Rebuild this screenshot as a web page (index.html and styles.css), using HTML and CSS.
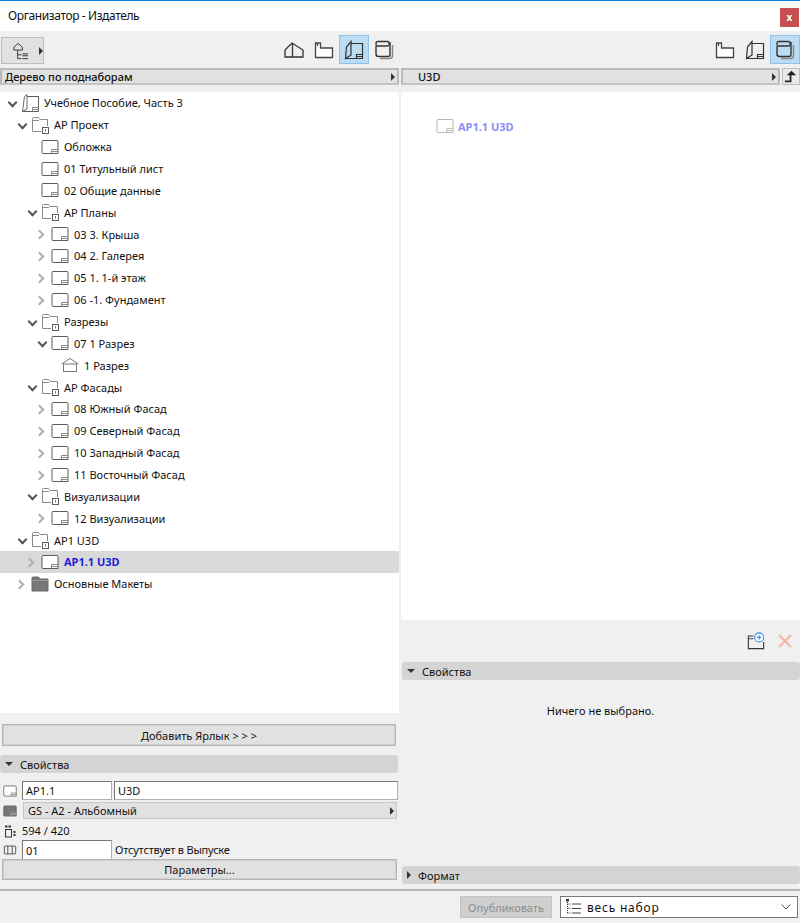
FILE: index.html
```html
<!DOCTYPE html>
<html lang="ru">

<head>
  <meta charset="utf-8">
  <title>Организатор - Издатель</title>
  <link rel="stylesheet" href="styles.css">
</head>

<body>
  <svg class="sprites" xmlns="http://www.w3.org/2000/svg">
    <symbol id="i-sheet" viewBox="0 0 18 16">
      <path d="M2 1.500H16a1 1 0 0 1 1 1V14.500H2a1 1 0 0 1-1-1V2.500a1 1 0 0 1 1-1z" fill="#fff" stroke="#5c5c5c" />
      <path d="M10.500 14.500V10.500H17M10.500 12.500H17" fill="none" stroke="#8a8a8a" />
    </symbol>
    <symbol id="i-sheet-light" viewBox="0 0 18 16">
      <path d="M2 1.500H16a1 1 0 0 1 1 1V14.500H2a1 1 0 0 1-1-1V2.500a1 1 0 0 1 1-1z" fill="#fff" stroke="#b8b8b8" />
      <path d="M10.500 14.500V10.500H17M10.500 12.500H17" fill="none" stroke="#c4c4c4" />
    </symbol>
    <symbol id="i-sheet-fill" viewBox="0 0 18 16">
      <path d="M2 1.500H16a1 1 0 0 1 1 1V14.500H2a1 1 0 0 1-1-1V2.500a1 1 0 0 1 1-1z" fill="#777" stroke="#5c5c5c" />
      <path d="M10.500 14.500V10.500H17M10.500 12.500H17" fill="none" stroke="#aaa" />
    </symbol>
    <symbol id="i-folder" viewBox="0 0 18 18">
      <path d="M1.500 15.500V2.500a1 1 0 0 1 1-1h5l1.500 2H16.500V10M1.500 15.500H10" fill="none" stroke="#8a8a8a" />
      <path d="M1.500 4.500H8" fill="none" stroke="#8a8a8a" />
      <rect x="11.500" y="11.500" width="6" height="6" fill="#fff" stroke="#5c5c5c" />
      <path d="M14.500 13v2.500" stroke="#777" />
    </symbol>
    <symbol id="i-folder-fill" viewBox="0 0 18 16">
      <path d="M1 15V2a1 1 0 0 1 1-1h5.500l1.500 2H17v12z" fill="#777" stroke="#6a6a6a" />
      <path d="M1 4.500H17" stroke="#999" />
    </symbol>
    <symbol id="i-book" viewBox="0 0 18 20">
      <path d="M1.500 18.500L3.500 3.500 6 1.500V16z" fill="#fff" stroke="#6a6a6a" />
      <path d="M6 3.500H17.500V18.500H1.500" fill="none" stroke="#5c5c5c" />
      <path d="M11.500 18.500V14.500H17.500M11.500 16.500H17.500" fill="none" stroke="#8a8a8a" />
    </symbol>
    <symbol id="i-section" viewBox="0 0 18 16">
      <path d="M.5 7L9 1.500 17.500 7" fill="none" stroke="#777" />
      <rect x="2.500" y="7" width="13" height="7.500" fill="#fff" stroke="#777" />
    </symbol>
    <symbol id="i-tb-house" viewBox="0 0 20 20">
      <path d="M1 17V10L8 3 19 10V17zM8.500 3V17" fill="none" stroke="#333" stroke-width="1.300" />
    </symbol>
    <symbol id="i-tb-layout" viewBox="0 0 20 18">
      <path d="M1.500 2H6.500V7H18.500V16.500H1.500zM3.500 2V5" fill="#fff" stroke="#444" stroke-width="1.300" />
    </symbol>
    <symbol id="i-tb-book" viewBox="0 0 20 20">
      <path d="M1.500 18.500L2.500 7 7 1.500V15z" fill="none" stroke="#333" stroke-width="1.200" />
      <path d="M7 3.500H18.500V18.500H1.500M12.500 18.500V14.500H18.500M12.500 16.500H18.500" fill="none" stroke="#333" stroke-width="1.200" />
    </symbol>
    <symbol id="i-tb-stack" viewBox="0 0 20 20">
      <path d="M18.500 5V15.500a3 3 0 0 1-3 3H6" fill="none" stroke="#888" stroke-width="1.500" />
      <rect x="2" y="1.500" width="13" height="4.500" rx="1.500" fill="none" stroke="#333" stroke-width="1.300" />
      <path d="M2 6V14a2.500 2.500 0 0 0 2.500 2.500H14a2 2 0 0 0 2-2V2" fill="none" stroke="#333" stroke-width="1.400" />
    </symbol>
    <symbol id="i-tree" viewBox="0 0 20 20">
      <path d="M3 6L7.500 2 12 6v3H3zM7 9v9M7 14h4M7 18h4" fill="none" stroke="#333" />
      <path d="M12 13h6M12 15h6M12 18h6" stroke="#333" />
    </symbol>
  </svg>

  <div class="window">
    <header class="titlebar">
      <span class="title">Организатор - Издатель</span>
      <button class="close-btn">x</button>
    </header>

    <div class="panes">
      <section class="pane pane-left">
        <div class="toolbar">
          <button class="tree-btn">
            <svg class="tree-icon"><use href="#i-tree" /></svg>
            <span class="arrow-right"></span>
          </button>
          <div class="tool-group">
            <span class="tool"><svg><use href="#i-tb-house" /></svg></span>
            <span class="tool"><svg><use href="#i-tb-layout" /></svg></span>
            <span class="tool active"><svg><use href="#i-tb-book" /></svg></span>
            <span class="tool"><svg><use href="#i-tb-stack" /></svg></span>
          </div>
        </div>
        <div class="picker-row">
          <div class="picker"><span>Дерево по поднаборам</span><span class="arrow-right"></span></div>
        </div>

        <ul class="tree">
          <li class="row lv0"><span class="chev down"></span><svg class="ico ico-book"><use href="#i-book" /></svg>Учебное Пособие, Часть 3</li>
          <li class="row lv1"><span class="chev down"></span><svg class="ico ico-folder"><use href="#i-folder" /></svg>АР Проект</li>
          <li class="row lv2"><span class="chev none"></span><svg class="ico"><use href="#i-sheet" /></svg>Обложка</li>
          <li class="row lv2"><span class="chev none"></span><svg class="ico"><use href="#i-sheet" /></svg>01 Титульный лист</li>
          <li class="row lv2"><span class="chev none"></span><svg class="ico"><use href="#i-sheet" /></svg>02 Общие данные</li>
          <li class="row lv2"><span class="chev down"></span><svg class="ico ico-folder"><use href="#i-folder" /></svg>АР Планы</li>
          <li class="row lv3"><span class="chev"></span><svg class="ico"><use href="#i-sheet" /></svg>03 3. Крыша</li>
          <li class="row lv3"><span class="chev"></span><svg class="ico"><use href="#i-sheet" /></svg>04 2. Галерея</li>
          <li class="row lv3"><span class="chev"></span><svg class="ico"><use href="#i-sheet" /></svg>05 1. 1-й этаж</li>
          <li class="row lv3"><span class="chev"></span><svg class="ico"><use href="#i-sheet" /></svg>06 -1. Фундамент</li>
          <li class="row lv2"><span class="chev down"></span><svg class="ico ico-folder"><use href="#i-folder" /></svg>Разрезы</li>
          <li class="row lv3"><span class="chev down"></span><svg class="ico"><use href="#i-sheet" /></svg>07 1 Разрез</li>
          <li class="row lv4"><span class="chev none"></span><svg class="ico"><use href="#i-section" /></svg>1 Разрез</li>
          <li class="row lv2"><span class="chev down"></span><svg class="ico ico-folder"><use href="#i-folder" /></svg>АР Фасады</li>
          <li class="row lv3"><span class="chev"></span><svg class="ico"><use href="#i-sheet" /></svg>08 Южный Фасад</li>
          <li class="row lv3"><span class="chev"></span><svg class="ico"><use href="#i-sheet" /></svg>09 Северный Фасад</li>
          <li class="row lv3"><span class="chev"></span><svg class="ico"><use href="#i-sheet" /></svg>10 Западный Фасад</li>
          <li class="row lv3"><span class="chev"></span><svg class="ico"><use href="#i-sheet" /></svg>11 Восточный Фасад</li>
          <li class="row lv2"><span class="chev down"></span><svg class="ico ico-folder"><use href="#i-folder" /></svg>Визуализации</li>
          <li class="row lv3"><span class="chev"></span><svg class="ico"><use href="#i-sheet" /></svg>12 Визуализации</li>
          <li class="row lv1"><span class="chev down"></span><svg class="ico ico-folder"><use href="#i-folder" /></svg>АР1 U3D</li>
          <li class="row lv2 selected"><span class="chev"></span><svg class="ico"><use href="#i-sheet" /></svg>АР1.1 U3D</li>
          <li class="row lv1"><span class="chev"></span><svg class="ico"><use href="#i-folder-fill" /></svg>Основные Макеты</li>
        </ul>

        <div class="left-bottom">
          <button class="wide-btn add-btn">Добавить Ярлык &gt; &gt; &gt;</button>
          <div class="section-head"><span class="arrow-down"></span>Свойства</div>
          <div class="prop-row prop-first">
            <svg class="prop-icon"><use href="#i-sheet" /></svg>
            <span class="field field-id">АР1.1</span>
            <span class="field field-name">U3D</span>
          </div>
          <div class="prop-row prop-select">
            <svg class="prop-icon"><use href="#i-sheet-fill" /></svg>
            <div class="master"><span>GS - A2 - Альбомный</span><span class="arrow-right"></span></div>
          </div>
          <div class="prop-row prop-size">
            <svg class="prop-icon" viewBox="0 0 14 14">
              <path d="M2 2.500h2.500M5.500 2.500h2.500" stroke="#333" stroke-width="2" />
              <rect x="2.500" y="5.500" width="6" height="7.500" fill="none" stroke="#333" />
              <path d="M11.500 7v6" stroke="#333" stroke-width="2" stroke-dasharray="2 1" />
            </svg>
            <span>594 / 420</span>
          </div>
          <div class="prop-row prop-num">
            <svg class="prop-icon" viewBox="0 0 16 12">
              <rect x="1.500" y="1.500" width="13" height="9" rx="1" fill="none" stroke="#444" />
              <path d="M5.500 1.500v9M10.500 1.500v9" stroke="#444" />
            </svg>
            <span class="field field-num">01</span>
            <span class="missing">Отсутствует в Выпуске</span>
          </div>
          <button class="wide-btn params-btn">Параметры...</button>
        </div>
      </section>

      <section class="pane pane-right">
        <div class="toolbar">
          <div></div>
          <div class="tool-group">
            <span class="tool"><svg><use href="#i-tb-layout" /></svg></span>
            <span class="tool"><svg><use href="#i-tb-book" /></svg></span>
            <span class="tool active"><svg><use href="#i-tb-stack" /></svg></span>
          </div>
        </div>
        <div class="picker-row">
          <div class="picker picker-u3d"><span>U3D</span><span class="arrow-right"></span></div>
          <button class="up-btn">
            <svg viewBox="0 0 16 14"><path d="M3 5.500h11L8.500 .5z" fill="#222" /><path d="M1 12.500H7.500V5" fill="none" stroke="#222" stroke-width="2" /></svg>
          </button>
        </div>

        <div class="canvas">
          <div class="canvas-item"><svg class="ico"><use href="#i-sheet-light" /></svg>АР1.1 U3D</div>
        </div>

        <div class="right-tools">
          <svg class="new-folder" viewBox="0 0 20 20">
            <path d="M7 4.500H1.500V18.500H18.500V11" fill="none" stroke="#333" stroke-width="1.200" />
            <path d="M1.500 7.500H7" stroke="#333" />
            <circle cx="13.500" cy="6" r="5" fill="#fff" stroke="#3b8ee8" stroke-width="1.200" />
            <path d="M13.500 3.500v5M11 6h5" stroke="#3b8ee8" stroke-width="1.200" />
          </svg>
          <svg class="remove" viewBox="0 0 14 14"><path d="M1 1L13 13M13 1L1 13" stroke="#f6b3a6" stroke-width="2" /></svg>
        </div>
        <div class="section-head"><span class="arrow-down"></span>Свойства</div>
        <div class="nothing">Ничего не выбрано.</div>
        <div class="section-head"><span class="arrow-right"></span>Формат</div>
      </section>
    </div>

    <footer class="footer">
      <button class="publish-btn">Опубликовать</button>
      <div class="scope">
        <svg class="scope-icon" viewBox="0 0 16 16">
          <path d="M1.500 1v13M1.500 5h3M1.500 9.500h3M1.500 14h3" stroke="#333" stroke-dasharray="1 1" />
          <path d="M6 5h9M6 9.500h9M6 14h9" stroke="#444" />
          <rect x="0" y="0" width="3" height="2.500" fill="#333" />
        </svg>
        <span>весь набор</span>
        <svg class="scope-chev" viewBox="0 0 10 6"><path d="M.5 .5L5 5 9.500 .5" fill="none" stroke="#555" /></svg>
      </div>
    </footer>
  </div>
</body>

</html>
```

FILE: styles.css
```css
* {
  box-sizing: border-box;
}

html,
body {
  margin: 0;
  height: 100%;
}

body {
  background: #f0f0f0;
  color: #111;
  font-family: "Noto Sans", "Open Sans", sans-serif;
  font-size: 11px;
}

button {
  font: inherit;
  color: inherit;
  padding: 0;
}

svg {
  display: block;
}

.sprites {
  display: none;
}

.window {
  display: flex;
  flex-direction: column;
  height: 923px;
}

/* title bar */
.titlebar {
  align-items: flex-start;
  background: #fff;
  border-top: 1px solid #0a84d8;
  display: flex;
  flex: 0 0 31px;
  justify-content: space-between;
  padding-top: 7px;
}

.title {
  font-size: 12px;
  letter-spacing: -.4px;
  line-height: 16px;
  padding-left: 8px;
}

.close-btn {
  background: #c75050;
  border: 0;
  color: #fff;
  font-size: 10px;
  font-weight: 700;
  height: 19px;
  line-height: 15px;
  margin-right: 1px;
  width: 19px;
}

/* panes */
.panes {
  display: grid;
  flex: 0 0 858px;
  grid-template-columns: 399px 399px;
  column-gap: 2px;
}

.pane {
  display: flex;
  flex-direction: column;
  min-height: 0;
}

.toolbar {
  align-items: flex-start;
  display: flex;
  flex: 0 0 37px;
  justify-content: space-between;
  padding-top: 4px;
}

.tree-btn {
  align-items: center;
  background: #e1e1e1;
  border: 1px solid #bdbdbd;
  display: flex;
  height: 27px;
  margin: 2px 0 0 1px;
  padding-left: 9px;
  width: 43px;
}

.tree-icon {
  height: 20px;
  margin-right: 9px;
  width: 20px;
}

.tool-group {
  display: flex;
}

.tool {
  align-items: center;
  border: 1px solid transparent;
  display: flex;
  height: 29px;
  justify-content: center;
  width: 30px;
}

.tool svg {
  height: 20px;
  width: 20px;
}

.tool.active {
  background: #bcdcf4;
  border-color: #8fc3ea;
}

.picker-row {
  display: flex;
  flex: 0 0 24px;
  gap: 2px;
  padding-bottom: 7px;
}

.picker {
  align-items: center;
  background: #e1e1e1;
  border: 2px solid #b9b9b9;
  border-bottom-color: #c4c4c4;
  display: flex;
  flex: 1;
  font-weight: 500;
  justify-content: space-between;
  line-height: 13px;
  padding: 0 2px 0 3px;
}

.picker-u3d {
  padding-left: 15px;
}

.up-btn {
  align-items: center;
  background: #e9e9e9;
  border: 1px solid #bdbdbd;
  display: flex;
  justify-content: center;
  width: 18px;
}

.up-btn svg {
  height: 13px;
  width: 14px;
}

.arrow-right {
  border-bottom: 4px solid transparent;
  border-left: 4px solid #333;
  border-top: 4px solid transparent;
  display: block;
  height: 0;
  width: 0;
}

.arrow-down {
  border-left: 4.500px solid transparent;
  border-right: 4.500px solid transparent;
  border-top: 4px solid #333;
  display: block;
  height: 0;
  width: 0;
}

/* tree */
.tree {
  background: #fff;
  flex: 1;
  list-style: none;
  margin: 0;
  padding: 0;
}

.row {
  align-items: center;
  display: flex;
  height: 21.860px;
  white-space: nowrap;
}

.lv0 { padding-left: 6px; }
.lv1 { padding-left: 16px; }
.lv2 { padding-left: 26px; }
.lv3 { padding-left: 36px; }
.lv4 { padding-left: 46px; }

.row.selected {
  background: #d9d9d9;
  color: #1c1cdc;
  font-weight: 700;
}

.chev {
  flex: 0 0 12px;
  height: 12px;
  margin-right: 3px;
  position: relative;
}

.chev::before {
  border-bottom: 2px solid #b0b0b0;
  border-right: 2px solid #b0b0b0;
  content: "";
  height: 5px;
  left: 0;
  position: absolute;
  top: 3px;
  transform: rotate(-45deg);
  width: 5px;
}

.chev.down::before {
  border-color: #555;
  left: 3px;
  top: 2px;
  transform: rotate(45deg);
}

.chev.none::before {
  display: none;
}

.ico {
  flex: 0 0 18px;
  height: 16px;
  margin-right: 5px;
  width: 18px;
}

.ico-book {
  height: 20px;
}

.ico-folder {
  height: 18px;
}

/* left bottom */
.left-bottom {
  display: flex;
  flex: 0 0 176px;
  flex-direction: column;
  padding-top: 11px;
}

.wide-btn {
  background: #e1e1e1;
  border: 1px solid #b4b4b4;
  outline: 1px solid #cfcfcf;
  outline-offset: -2px;
}

.add-btn {
  flex: 0 0 22px;
  margin: 0 3px 0 2px;
}

.section-head {
  align-items: center;
  background: #d4d4d4;
  border-radius: 3px;
  display: flex;
  flex: 0 0 18px;
  gap: 7px;
  padding-left: 5px;
}

.left-bottom .section-head {
  margin: 9px 1px 8px 0;
}

.prop-row {
  align-items: center;
  display: flex;
}

.prop-icon {
  flex: 0 0 14px;
  height: 14px;
  margin: 0 5px 0 3px;
  width: 14px;
}

.field {
  background: #fff;
  border: 1px solid #b0b0b0;
  border-left-color: #777;
  border-top-color: #777;
  display: flex;
  align-items: center;
  height: 19px;
  padding-left: 3px;
}

.field-id {
  width: 90px;
}

.field-name {
  margin-left: 2px;
  width: 284px;
}

.prop-select {
  margin-top: 2px;
}

.master {
  align-items: center;
  background: #e1e1e1;
  border: 1px solid #c8c8c8;
  display: flex;
  flex: 1;
  height: 17px;
  justify-content: space-between;
  margin: 0 2px 0 1px;
  padding: 0 2px 0 4px;
}

.prop-size {
  height: 21px;
  padding-top: 2px;
}

.prop-num {
  height: 19px;
}

.prop-num .field {
  border-bottom: 0;
}

.field-num {
  width: 90px;
}

.missing {
  letter-spacing: -.2px;
  margin-left: 3px;
}

.params-btn {
  flex: 0 0 21px;
  margin: 0 2px;
}

/* right */
.canvas {
  background: #fff;
  flex: 1;
  padding: 26px 0 0 35px;
}

.canvas-item {
  align-items: center;
  color: #8c8cf4;
  display: flex;
  font-weight: 700;
  height: 16px;
}

.canvas-item .ico {
  margin-right: 4px;
}

.right-tools {
  align-items: center;
  display: flex;
  flex: 0 0 42px;
  gap: 13px;
  justify-content: flex-end;
  padding-right: 8px;
}

.new-folder {
  height: 18px;
  width: 18px;
}

.remove {
  height: 14px;
  width: 14px;
}

.pane-right .section-head {
  margin-left: 1px;
}

.nothing {
  flex: 0 0 186px;
  padding-top: 23px;
  text-align: center;
}

.pane-right .section-head:last-child {
  margin-bottom: 5px;
}

/* footer */
.footer {
  align-items: flex-start;
  border-top: 2px solid #b5b5b5;
  display: flex;
  flex: 1;
  gap: 8px;
  justify-content: flex-end;
  padding: 5px 2px 0 0;
}

.publish-btn {
  background: #cfcfcf;
  border: 1px solid #c4c4c4;
  color: #8c8c8c;
  height: 22px;
  width: 92px;
}

.scope {
  align-items: center;
  background: #fff;
  border: 1px solid #7a7a7a;
  display: flex;
  height: 22px;
  padding: 0 6px 0 5px;
  width: 238px;
}

.scope-icon {
  height: 16px;
  margin-right: 5px;
  width: 16px;
}

.scope span {
  flex: 1;
  font-size: 12px;
  letter-spacing: .8px;
}

.scope-chev {
  height: 6px;
  width: 10px;
}
```
